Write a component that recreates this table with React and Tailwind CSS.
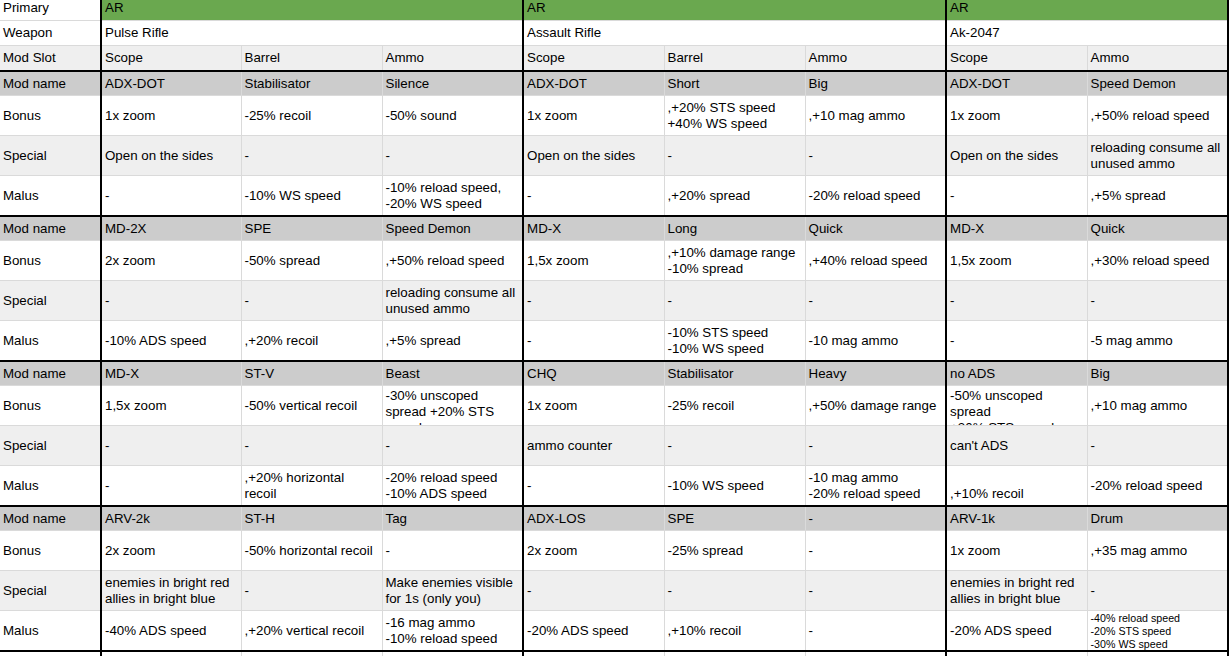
import React from 'react';

const THICK_COLS = [0, 3, 6, 8];

function rightBorder(endCol) {
  return THICK_COLS.includes(endCol)
    ? 'border-r-2 border-r-black'
    : 'border-r border-r-[#dadada]';
}

function Cell({ content, endCol, colSpan = 1, thickBottom, bg, h, align = 'center' }) {
  let lines = content;
  let small = false;
  let top = false;
  if (content && typeof content === 'object' && !Array.isArray(content)) {
    lines = content.t;
    small = !!content.small;
    top = !!content.top;
  }
  if (!Array.isArray(lines)) lines = [lines];
  let alignCls = 'justify-center';
  if (align === 'bottom') alignCls = 'justify-end pb-[4px]';
  if (top) alignCls = 'justify-start pt-[2px]';
  if (small) alignCls = 'justify-start pt-[1px]';
  const bottomCls = thickBottom
    ? 'border-b-2 border-b-black'
    : 'border-b border-b-[#dadada]';
  return (
    <td colSpan={colSpan} className={`p-0 align-top ${bg} ${rightBorder(endCol)} ${bottomCls}`}>
      <div className={`${h} overflow-hidden flex flex-col ${alignCls} px-[3px]`}>
        {lines.map((l, i) =>
          small ? (
            <div key={i} className="h-[13px] shrink-0 whitespace-nowrap text-[10.67px] leading-[13px]">
              {l}
            </div>
          ) : (
            <div key={i} className="h-[16px] shrink-0 whitespace-nowrap">
              {l}
            </div>
          )
        )}
      </div>
    </td>
  );
}

const blocks = [
  {
    mod: ['ADX-DOT', 'Stabilisator', 'Silence', 'ADX-DOT', 'Short', 'Big', 'ADX-DOT', 'Speed Demon'],
    bonus: ['1x zoom', '-25% recoil', '-50% sound', '1x zoom', [',+20% STS speed', '+40% WS speed'], ',+10 mag ammo', '1x zoom', ',+50% reload speed'],
    special: ['Open on the sides', '-', '-', 'Open on the sides', '-', '-', 'Open on the sides', ['reloading consume all', 'unused ammo']],
    malus: ['-', '-10% WS speed', ['-10% reload speed,', '-20% WS speed'], '-', ',+20% spread', '-20% reload speed', '-', ',+5% spread'],
  },
  {
    mod: ['MD-2X', 'SPE', 'Speed Demon', 'MD-X', 'Long', 'Quick', 'MD-X', 'Quick'],
    bonus: ['2x zoom', '-50% spread', ',+50% reload speed', '1,5x zoom', [',+10% damage range', '-10% spread'], ',+40% reload speed', '1,5x zoom', ',+30% reload speed'],
    special: ['-', '-', ['reloading consume all', 'unused ammo'], '-', '-', '-', '-', '-'],
    malus: ['-10% ADS speed', ',+20% recoil', ',+5% spread', '-', ['-10% STS speed', '-10% WS speed'], '-10 mag ammo', '-', '-5 mag ammo'],
  },
  {
    mod: ['MD-X', 'ST-V', 'Beast', 'CHQ', 'Stabilisator', 'Heavy', 'no ADS', 'Big'],
    bonus: [
      '1,5x zoom',
      '-50% vertical recoil',
      { t: ['-30% unscoped', 'spread +20% STS', 'speed'], top: true },
      '1x zoom',
      '-25% recoil',
      ',+50% damage range',
      { t: ['-50% unscoped', 'spread', '+30% STS speed'], top: true },
      ',+10 mag ammo',
    ],
    special: ['-', '-', '-', 'ammo counter', '-', '-', "can't ADS", '-'],
    malus: ['-', [',+20% horizontal', 'recoil'], ['-20% reload speed', '-10% ADS speed'], '-', '-10% WS speed', ['-10 mag ammo', '-20% reload speed'], ['', ',+10% recoil'], '-20% reload speed'],
  },
  {
    mod: ['ARV-2k', 'ST-H', 'Tag', 'ADX-LOS', 'SPE', '-', 'ARV-1k', 'Drum'],
    bonus: ['2x zoom', '-50% horizontal recoil', '-', '2x zoom', '-25% spread', '-', '1x zoom', ',+35 mag ammo'],
    special: [['enemies in bright red', 'allies in bright blue'], '-', ['Make enemies visible', 'for 1s (only you)'], '-', '-', '-', ['enemies in bright red', 'allies in bright blue'], '-'],
    malus: [
      '-40% ADS speed',
      ',+20% vertical recoil',
      ['-16 mag ammo', '-10% reload speed'],
      '-20% ADS speed',
      ',+10% recoil',
      '-',
      '-20% ADS speed',
      { t: ['-40% reload speed', '-20% STS speed', '-30% WS speed'], small: true },
    ],
  },
];

const rowDefs = [
  { key: 'mod', label: 'Mod name', bg: 'bg-[#cccccc]', h: 'h-[23px]' },
  { key: 'bonus', label: 'Bonus', bg: 'bg-white', h: 'h-[39px]' },
  { key: 'special', label: 'Special', bg: 'bg-[#efefef]', h: 'h-[39px]' },
  { key: 'malus', label: 'Malus', bg: 'bg-white', h: 'h-[39px]', thick: true },
];

export default function App() {
  return (
    <div className="w-[1231px] h-[656px] overflow-hidden bg-white text-black font-['Liberation_Sans',Arial,sans-serif] text-[13.33px] leading-[16px]">
      <table className="table-fixed border-collapse w-[1228px]">
        <colgroup>
          <col className="w-[101px]" />
          <col className="w-[140px]" />
          <col className="w-[141px]" />
          <col className="w-[141px]" />
          <col className="w-[141px]" />
          <col className="w-[141px]" />
          <col className="w-[141px]" />
          <col className="w-[141px]" />
          <col className="w-[141px]" />
        </colgroup>
        <tbody>
          <tr>
            <Cell content="Primary" endCol={0} bg="bg-white" h="h-[20px]" align="bottom" />
            <Cell content="AR" endCol={3} colSpan={3} bg="bg-[#6aa84f]" h="h-[20px]" align="bottom" />
            <Cell content="AR" endCol={6} colSpan={3} bg="bg-[#6aa84f]" h="h-[20px]" align="bottom" />
            <Cell content="AR" endCol={8} colSpan={2} bg="bg-[#6aa84f]" h="h-[20px]" align="bottom" />
          </tr>
          <tr>
            <Cell content="Weapon" endCol={0} bg="bg-white" h="h-[24px]" />
            <Cell content="Pulse Rifle" endCol={3} colSpan={3} bg="bg-white" h="h-[24px]" />
            <Cell content="Assault Rifle" endCol={6} colSpan={3} bg="bg-white" h="h-[24px]" />
            <Cell content="Ak-2047" endCol={8} colSpan={2} bg="bg-white" h="h-[24px]" />
          </tr>
          <tr>
            {['Mod Slot', 'Scope', 'Barrel', 'Ammo', 'Scope', 'Barrel', 'Ammo', 'Scope', 'Ammo'].map((t, i) => (
              <Cell key={i} content={t} endCol={i} bg="bg-[#efefef]" h="h-[24px]" thickBottom />
            ))}
          </tr>
          {blocks.map((b, bi) =>
            rowDefs.map((r) => (
              <tr key={`${bi}-${r.key}`}>
                <Cell content={r.label} endCol={0} bg={r.bg} h={r.h} thickBottom={r.thick} />
                {b[r.key].map((c, ci) => (
                  <Cell key={ci} content={c} endCol={ci + 1} bg={r.bg} h={r.h} thickBottom={r.thick} />
                ))}
              </tr>
            ))
          )}
          <tr>
            {Array.from({ length: 9 }).map((_, i) => (
              <Cell key={i} content="" endCol={i} bg="bg-white" h="h-[16px]" />
            ))}
          </tr>
        </tbody>
      </table>
    </div>
  );
}
